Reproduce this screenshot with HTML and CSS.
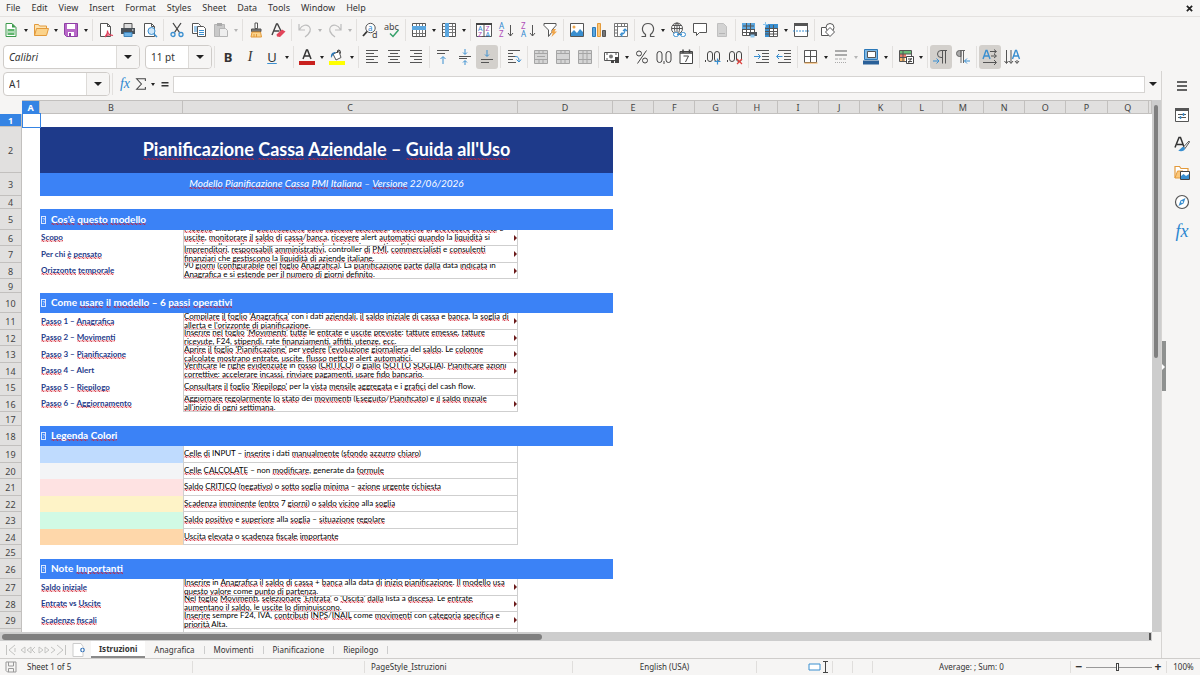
FILE: index.html
```html
<!DOCTYPE html>
<html lang="it">
<head>
<meta charset="utf-8">
<title>Pianificazione Cassa – Istruzioni</title>
<link rel="stylesheet" href="styles.css">
</head>
<body>
<header class="menubar">
  <button>File</button><button>Edit</button><button>View</button><button>Insert</button><button>Format</button><button>Styles</button><button>Sheet</button><button>Data</button><button>Tools</button><button>Window</button><button>Help</button>
  <button class="close" aria-label="Close"><svg viewBox="0 0 8 8" width="7" height="7"><path d="M1 1l6 6M7 1l-6 6" stroke="#222" stroke-width="2"/></svg></button>
</header>

<div class="toolbar">
  <button class="tool" aria-label="New"><svg viewBox="0 0 16 16"><path d="M3 1.500h6l4 4v9H3z" fill="#fff" stroke="#3c9a4c"/><path d="M9 1.500v4h4z" fill="#3c9a4c"/><path d="M4.500 7h7v6h-7z" fill="#5fb56d"/><path d="M5 10h6" stroke="#fff"/></svg></button><button class="caret" aria-label="New options"></button>
  <button class="tool" aria-label="Open"><svg viewBox="0 0 16 16"><path d="M1.500 13.500v-11h4l1 1.500h7v3" fill="#fde3b0" stroke="#e39a3b"/><path d="M1.500 13.500l2-7h12l-2 7z" fill="#fbd38b" stroke="#e39a3b"/></svg></button><button class="caret" aria-label="Open options"></button>
  <button class="tool" aria-label="Save"><svg viewBox="0 0 16 16"><path d="M1.500 1.500h13v13h-11l-2-2z" fill="#b868c8" stroke="#8e3fa5"/><path d="M4 2h8v5H4z" fill="#fff"/><path d="M5 10h6v4H5z" fill="#fff"/><path d="M6 11h2v3H6z" fill="#8e3fa5"/></svg></button><button class="caret" aria-label="Save options"></button>
  <span class="sep"></span>
  <button class="tool" aria-label="Export as PDF"><svg viewBox="0 0 16 16"><path d="M2.500 1.500h7l3 3v10h-10z" fill="#fff" stroke="#555"/><path d="M9.500 1.500v3h3" fill="none" stroke="#555"/><path d="M7 15c2-2 3-4 2.500-6.500M9.500 9c.5 3 2 4 5 4.500M7 14.500c2-1.500 5-2 8-1" fill="none" stroke="#e0405c" stroke-width="1.200"/></svg></button>
  <button class="tool" aria-label="Print"><svg viewBox="0 0 16 16"><path d="M4 1.500h8v5H4z" fill="#ddd" stroke="#555"/><path d="M1 6h14v6H1z" fill="#4a5158"/><path d="M4 10.500h8v4H4z" fill="#6fb3e6" stroke="#3f83b8"/><path d="M12 8h1.500" stroke="#fff"/></svg></button>
  <button class="tool" aria-label="Print preview"><svg viewBox="0 0 16 16"><path d="M2.500 1.500h7l3 3v10h-10z" fill="#fff" stroke="#555"/><path d="M9.500 1.500v3h3" fill="none" stroke="#555"/><circle cx="9.500" cy="9" r="3.500" fill="#cfe6f8" stroke="#3a8fd0"/><path d="M12 12l3 3" stroke="#3a8fd0" stroke-width="1.500"/></svg></button>
  <span class="sep"></span>
  <button class="tool" aria-label="Cut"><svg viewBox="0 0 16 16"><path d="M4 1l6.500 9.500M12 1L5.500 10.500" stroke="#444" stroke-width="1.300"/><circle cx="4" cy="12.500" r="2" fill="none" stroke="#3a8fd0" stroke-width="1.300"/><circle cx="12" cy="12.500" r="2" fill="none" stroke="#3a8fd0" stroke-width="1.300"/></svg></button>
  <button class="tool" aria-label="Copy"><svg viewBox="0 0 16 16"><path d="M1.500 1.500h6l2 2v8h-8z" fill="#fff" stroke="#555"/><path d="M3 5h4M3 7h3M3 9h3" stroke="#3a8fd0"/><path d="M6.500 4.500h6l2 2v8h-8z" fill="#fff" stroke="#555"/><path d="M8 8.500h5M8 10.500h5M8 12.500h5" stroke="#3a8fd0"/></svg></button>
  <button class="tool" aria-label="Paste" disabled><svg viewBox="0 0 16 16"><path d="M1.500 2.500h10v12h-10z" fill="#c9c9c9" stroke="#b5b5b5"/><path d="M4 1h5v3H4z" fill="#a9a9a9"/><path d="M6.500 6.500h6l2 2v6h-8z" fill="#eee" stroke="#b5b5b5"/></svg></button><button class="caret off" aria-label="Paste options"></button>
  <span class="sep"></span>
  <button class="tool" aria-label="Clone formatting"><svg viewBox="0 0 16 16"><path d="M7 1h2.500v5.500H7z" fill="#fff" stroke="#555"/><path d="M3.500 7h9.500v2.500H3.500z" fill="#777" stroke="#555"/><path d="M4 10h8.500l1 5H3z" fill="#fbd38b" stroke="#e39a3b"/><path d="M6 12v3M8.500 12v3" stroke="#e39a3b"/></svg></button>
  <button class="tool" aria-label="Clear formatting"><svg viewBox="0 0 16 16"><path d="M2 13L6.500 2h1L12 11M3.500 9h6" fill="none" stroke="#444" stroke-width="1.400"/><path d="M6.500 12.500l5.500-5 3.500 2-5.500 5.500-3-.5z" fill="#e2455a"/></svg></button>
  <span class="sep"></span>
  <button class="tool" aria-label="Undo" disabled><svg viewBox="0 0 16 16"><path d="M2 2v6h6M2.500 7.500C5 3 10 1.500 12.500 5s-.5 7-4.500 10" fill="none" stroke="#bdbdbd" stroke-width="1.200"/></svg></button><button class="caret off" aria-label="Undo list"></button>
  <button class="tool" aria-label="Redo" disabled><svg viewBox="0 0 16 16"><path d="M14 2v6H8M13.500 7.500C11 3 6 1.500 3.500 5s.5 7 4.500 10" fill="none" stroke="#bdbdbd" stroke-width="1.200"/></svg></button><button class="caret off" aria-label="Redo list"></button>
  <span class="sep"></span>
  <button class="tool" aria-label="Find and replace"><svg viewBox="0 0 16 16"><circle cx="8.500" cy="6" r="4.700" fill="#fff" stroke="#555"/><path d="M5 9.500L1 14" stroke="#333" stroke-width="1.800"/><text x="6" y="8.500" class="gl blue" font-size="8">a</text><text x="10" y="15.500" class="gl" font-size="9">d</text></svg></button>
  <button class="tool" aria-label="Spelling"><svg viewBox="0 0 16 16"><text x="0" y="7.500" class="gl" font-size="9">abc</text><path d="M6 11.500l3 3 5.500-6.500" fill="none" stroke="#35a06a" stroke-width="1.500"/></svg></button>
  <span class="sep"></span>
  <button class="tool" aria-label="Row"><svg viewBox="0 0 16 16"><path d="M1.500 1.500h13v13h-13z" fill="#fff" stroke="#555"/><path d="M5.500 2v12M8.500 2v12M11.500 2v12M2 11.500h12" stroke="#777"/><path d="M1 4h14v4H1z" fill="#5ba7e0"/></svg></button><button class="caret" aria-label="Row options"></button>
  <button class="tool" aria-label="Column"><svg viewBox="0 0 16 16"><path d="M1.500 1.500h13v13h-13z" fill="#fff" stroke="#555"/><path d="M2 4.500h12M2 7.500h12M2 10.500h12M11.500 2v12" stroke="#777"/><path d="M4 1h4v14H4z" fill="#5ba7e0"/></svg></button><button class="caret" aria-label="Column options"></button>
  <span class="sep"></span>
  <button class="tool" aria-label="Sort"><svg viewBox="0 0 16 16"><path d="M.5 1.500h15v13H.5zM8 2v13" fill="#fff" stroke="#555"/><path d="M0 1h16v2H0z" fill="#444"/><text x="2" y="9" class="gl blue" font-size="7">A</text><text x="2" y="14.500" class="gl violet" font-size="7">Z</text><text x="9.500" y="9" class="gl violet" font-size="7">Z</text><text x="9.500" y="14.500" class="gl blue" font-size="7">A</text></svg></button>
  <button class="tool" aria-label="Sort ascending"><svg viewBox="0 0 16 16"><text x="1" y="7" class="gl blue" font-size="8">A</text><text x="1" y="15" class="gl violet" font-size="8">Z</text><path d="M12.500 3v11M10 11l2.500 3 2.500-3" fill="none" stroke="#555"/></svg></button>
  <button class="tool" aria-label="Sort descending"><svg viewBox="0 0 16 16"><text x="1" y="7" class="gl violet" font-size="8">Z</text><text x="1" y="15" class="gl blue" font-size="8">A</text><path d="M12.500 3v11M10 11l2.500 3 2.500-3" fill="none" stroke="#555"/></svg></button>
  <button class="tool" aria-label="AutoFilter"><svg viewBox="0 0 16 16"><path d="M2 1.500h12v2L10 8v2l-3.500 4.500V8L2 3.500z" fill="#fff" stroke="#555"/><path d="M11 7h3l-1.500 2.500H15L9.500 15l1.200-4H9z" fill="#f0a64b"/></svg></button>
  <span class="sep"></span>
  <button class="tool" aria-label="Insert image"><svg viewBox="0 0 16 16"><path d="M1.500 1.500h13v13h-13z" fill="#fff" stroke="#555"/><path d="M2 14v-3l3-3 3 3 3-4 3 3v4z" fill="#3a8fd0"/><circle cx="5" cy="5" r="1.500" fill="#f0a64b"/></svg></button>
  <button class="tool" aria-label="Insert chart"><svg viewBox="0 0 16 16"><path d="M1.500 5.500h3v9h-3z" fill="#5ba7e0" stroke="#2b78b8"/><path d="M6.500 1.500h3v13h-3z" fill="#fbc77a" stroke="#e39a3b"/><path d="M11.500 8.500h3v6h-3z" fill="#777" stroke="#555"/></svg></button>
  <button class="tool" aria-label="Pivot table"><svg viewBox="0 0 16 16"><path d="M1.500 1.500h13v13h-13z" fill="#fff" stroke="#777"/><path d="M4.500 2v12M2 4.500h12M2 8h3M2 11h3M8.500 2v3M11.500 2v3" stroke="#777"/><path d="M7.500 12.500c3 0 4.500-1.500 4.500-5M10 9l2-2 2 2M9.500 10.500l-2 2 2 2" fill="none" stroke="#3a8fd0" stroke-width="1.200"/></svg></button>
  <span class="sep"></span>
  <button class="tool" aria-label="Special character"><svg viewBox="0 0 16 16"><path d="M1.500 14.500h4v-2C0 8 2.500 1.500 8 1.500s8 6.500 2.500 11v2h4" fill="none" stroke="#555" stroke-width="1.200"/></svg></button><button class="caret" aria-label="Special character list"></button>
  <button class="tool" aria-label="Hyperlink"><svg viewBox="0 0 16 16"><circle cx="7" cy="6.500" r="5.500" fill="#fff" stroke="#555"/><path d="M1.500 6.500h11M7 1v11M3 3.500h8" stroke="#555"/><ellipse cx="7" cy="6.500" rx="2.500" ry="5.500" fill="none" stroke="#555"/><rect x="3.500" y="10.500" width="5" height="4" rx="2" fill="#fff" stroke="#3a8fd0"/><rect x="10.500" y="10.500" width="5" height="4" rx="2" fill="#fff" stroke="#3a8fd0"/><path d="M7 12.500h5" stroke="#3a8fd0"/></svg></button>
  <button class="tool" aria-label="Comment"><svg viewBox="0 0 16 16"><path d="M1.500 1.500h13v9h-7l-3 3v-3h-3z" fill="#fff" stroke="#555"/></svg></button>
  <button class="tool" aria-label="Headers and footers" disabled><svg viewBox="0 0 16 16"><path d="M3.500 1.500h6l3 3v10h-9z" fill="#d3d3d3" stroke="#c0c0c0"/><path d="M5 11.500h6" stroke="#b5b5b5"/></svg></button>
  <span class="sep"></span>
  <button class="tool" aria-label="Print area"><svg viewBox="0 0 16 16"><path d="M1.500 1.500h12v12h-12z" fill="#fff" stroke="#555"/><path d="M1 1h13v6H1z" fill="#5ba7e0"/><path d="M2 4h11M5.500 1v12M9.500 1v12M2 7.500h11M2 10.500h11" stroke="#555"/><path d="M8 10h8v4H8z" fill="#4a5158"/><path d="M9.500 12.500h4v3h-4z" fill="#8cc4ec"/></svg></button>
  <button class="tool" aria-label="Freeze panes"><svg viewBox="0 0 16 16"><path d="M2.500 2.500h12v12h-12z" fill="#fff" stroke="#555"/><path d="M2 2h13v4H2zM2 2h4v13H2z" fill="#3a8fd0"/><path d="M2 6.500h13M6.500 3v12M10.500 3v12M2 9.500h13M2 12h13" stroke="#555"/><path d="M2.500 0v5M0 2.500h5" stroke="#8cc4ec"/></svg></button><button class="caret" aria-label="Freeze options"></button>
  <button class="tool" aria-label="Split window"><svg viewBox="0 0 16 16"><path d="M1.500 1.500h13v13h-13z" fill="#fff" stroke="#555"/><path d="M1 1h14v3H1z" fill="#555"/><path d="M0 9h16" stroke="#3a8fd0" stroke-dasharray="2 1"/></svg></button>
  <span class="sep"></span>
  <button class="tool" aria-label="Draw functions"><svg viewBox="0 0 16 16"><path d="M1.500 5.500h7v8h-7z" fill="#fff" stroke="#555"/><circle cx="10" cy="5.500" r="4" fill="#fff" stroke="#555"/><path d="M10 5.500l4.500 4.500-4.500 4.500L5.500 10z" fill="#fff" stroke="#555"/></svg></button>
</div>

<div class="toolbar format">
  <div class="combo font-name"><input value="Calibri" aria-label="Font name"><button aria-label="Font list"><i class="arrow"></i></button></div>
  <div class="combo font-size"><input value="11 pt" aria-label="Font size"><button aria-label="Size list"><i class="arrow"></i></button></div>
  <span class="sep"></span>
  <button class="tool bold" aria-label="Bold">B</button>
  <button class="tool ital" aria-label="Italic">I</button>
  <button class="tool under" aria-label="Underline">U</button><button class="caret" aria-label="Underline style"></button>
  <span class="sep"></span>
  <button class="tool" aria-label="Font color"><svg viewBox="0 0 16 16"><path d="M4 10L7.500 1h1L12 10M5.500 7h5" fill="none" stroke="#333" stroke-width="1.500"/><path d="M0 12h16v4H0z" fill="#c9211e"/></svg></button><button class="caret" aria-label="Font colors"></button>
  <button class="tool" aria-label="Background color"><svg viewBox="0 0 16 16"><path d="M4 5l6-2.500 2 6-5 2.500z" fill="#fff" stroke="#555"/><path d="M8 4l1-3 2 .5.500 3" fill="none" stroke="#333"/><path d="M2 9c-.5-4 1-6 5-6L4 6z" fill="#2b78b8"/><path d="M0 12h16v4H0z" fill="#ff0"/></svg></button><button class="caret" aria-label="Background colors"></button>
  <span class="sep"></span>
  <button class="tool" aria-label="Align left"><svg viewBox="0 0 16 16"><path d="M2 1.500h12M2 4.500h8M2 7.500h12M2 10.500h8M2 13.500h12" stroke="#555"/></svg></button>
  <button class="tool" aria-label="Center horizontally"><svg viewBox="0 0 16 16"><path d="M2 1.500h12M4 4.500h8M2 7.500h12M4 10.500h8M2 13.500h12" stroke="#555"/></svg></button>
  <button class="tool" aria-label="Align right"><svg viewBox="0 0 16 16"><path d="M2 1.500h12M6 4.500h8M2 7.500h12M6 10.500h8M2 13.500h12" stroke="#555"/></svg></button>
  <span class="sep"></span>
  <button class="tool" aria-label="Align top"><svg viewBox="0 0 16 16"><path d="M2 1.500h12M2 4.500h8" stroke="#555"/><path d="M8 15V8M5.500 10L8 7.500l2.500 2.500" fill="none" stroke="#3a8fd0"/></svg></button>
  <button class="tool" aria-label="Center vertically"><svg viewBox="0 0 16 16"><path d="M2 7.500h12M2 9.500h8" stroke="#555"/><path d="M8 0v5M6 3.500l2 2 2-2M8 16v-4M6 13.500l2-2 2 2" fill="none" stroke="#3a8fd0"/></svg></button>
  <button class="tool on" aria-label="Align bottom"><svg viewBox="0 0 16 16"><path d="M2 10.500h12M2 13.500h8" stroke="#555"/><path d="M8 1v6M6 5.500l2 2 2-2" fill="none" stroke="#3a8fd0"/></svg></button>
  <span class="sep"></span>
  <button class="tool" aria-label="Wrap text"><svg viewBox="0 0 16 16"><path d="M2 1.500h12M2 4.500h5M2 7.500h8M2 10.500h5M2 13.500h8" stroke="#555"/><path d="M9 7.500c3 0 4 1 4 5M10.500 10.500L13 13l2-2.500" fill="none" stroke="#3a8fd0"/></svg></button>
  <span class="sep"></span>
  <button class="tool" aria-label="Merge and center" disabled><svg viewBox="0 0 16 16"><path d="M1.500 1.500h13v13h-13z" fill="#d5d5d5" stroke="#a5a5a5"/><path d="M2 4.500h12M2 10.500h12M6 2v2M10 2v2M6 11v3M10 11v3M4 7.500h8" stroke="#a5a5a5"/></svg></button>
  <button class="tool" aria-label="Merge cells" disabled><svg viewBox="0 0 16 16"><path d="M1.500 1.500h13v13h-13z" fill="#d5d5d5" stroke="#a5a5a5"/><path d="M2 4.500h12M2 10.500h12M6 2v2M10 2v2M6 11v3M10 11v3" stroke="#a5a5a5"/></svg></button>
  <button class="tool" aria-label="Split cells" disabled><svg viewBox="0 0 16 16"><path d="M1.500 1.500h13v13h-13z" fill="#d5d5d5" stroke="#a5a5a5"/><path d="M2 4.500h12M2 10.500h12M6 2v12M10 2v12" stroke="#a5a5a5"/></svg></button>
  <span class="sep"></span>
  <button class="tool" aria-label="Format as currency"><svg viewBox="0 0 16 16"><path d="M.5 3.500h14v8H.5z" fill="#fff" stroke="#555"/><circle cx="7" cy="7.500" r="2" fill="#777"/><path d="M2 5h2M11 5h2M2 10h2" stroke="#555"/><path d="M11 8h4v6h-4zM7 11h3v3H7z" fill="#444"/></svg></button><button class="caret" aria-label="Currency list"></button>
  <button class="tool" aria-label="Format as percent"><svg viewBox="0 0 16 16"><circle cx="5" cy="4.500" r="2.500" fill="none" stroke="#444"/><circle cx="11" cy="11.500" r="2.500" fill="none" stroke="#444"/><path d="M12.500 1.500l-9 13" stroke="#444"/></svg></button>
  <button class="tool" aria-label="Format as number"><svg viewBox="0 0 16 16"><rect x="1" y="2.500" width="5" height="11" rx="2.500" fill="none" stroke="#444"/><rect x="10" y="2.500" width="5" height="11" rx="2.500" fill="none" stroke="#444"/><path d="M8 12v3" stroke="#444"/></svg></button>
  <button class="tool" aria-label="Format as date"><svg viewBox="0 0 16 16"><path d="M2 2.500h12.500v12H2z" fill="#fff" stroke="#444"/><path d="M2 4h12M5 .5v3M11.500.5v3" stroke="#444" stroke-width="1.500"/><path d="M5.500 7h5L7.500 13" fill="none" stroke="#444"/></svg></button>
  <span class="sep"></span>
  <button class="tool" aria-label="Add decimal place"><svg viewBox="0 0 16 16"><rect x="2.500" y="2.500" width="5" height="10" rx="2.500" fill="none" stroke="#444"/><rect x="9.500" y="2.500" width="5" height="10" rx="2.500" fill="none" stroke="#444"/><path d="M.5 11v2" stroke="#444"/><path d="M12.500 9.500v6M9.500 12.500h6" stroke="#3a8fd0" stroke-width="1.200"/></svg></button>
  <button class="tool" aria-label="Delete decimal place"><svg viewBox="0 0 16 16"><rect x="2.500" y="2.500" width="5" height="10" rx="2.500" fill="none" stroke="#444"/><rect x="9.500" y="2.500" width="5" height="10" rx="2.500" fill="none" stroke="#444"/><path d="M.5 11v2" stroke="#444"/><path d="M10 10l5 5M15 10l-5 5" stroke="#e0403c" stroke-width="1.200"/></svg></button>
  <span class="sep"></span>
  <button class="tool" aria-label="Increase indent"><svg viewBox="0 0 16 16"><path d="M2 1.500h13M8 4.500h7M8 7.500h7M8 10.500h7M2 13.500h13" stroke="#555"/><path d="M0 7.500h6M4 5l2.500 2.500L4 10" fill="none" stroke="#3a8fd0"/></svg></button>
  <button class="tool" aria-label="Decrease indent"><svg viewBox="0 0 16 16"><path d="M2 1.500h13M8 4.500h7M8 7.500h7M8 10.500h7M2 13.500h13" stroke="#555"/><path d="M6.500 7.500H1M3 5L.5 7.500 3 10" fill="none" stroke="#3a8fd0"/></svg></button>
  <span class="sep"></span>
  <button class="tool" aria-label="Borders"><svg viewBox="0 0 16 16"><path d="M1.500 1.500h12v12h-12zM7.500 2v12M2 7.500h12" fill="#fff" stroke="#555"/><path d="M1.500 14h13" stroke="#f0a64b"/></svg></button><button class="caret" aria-label="Border list"></button>
  <button class="tool" aria-label="Border style" disabled><svg viewBox="0 0 16 16"><path d="M2 2h12M2 6h12" stroke="#aaa" stroke-width="2"/><path d="M2 10h12" stroke="#aaa" stroke-dasharray="3 1"/><path d="M2 13.500h12" stroke="#aaa" stroke-dasharray="1 1"/></svg></button><button class="caret off" aria-label="Border styles"></button>
  <button class="tool" aria-label="Border color"><svg viewBox="0 0 16 16"><path d="M1.500.5h13v10h-13z" fill="#7db8e6" stroke="#2b78b8"/><path d="M4.500 2.500h8v6h-8z" fill="#fff" stroke="#555"/><path d="M0 11.500h16v4H0z" fill="#2a6099"/></svg></button><button class="caret" aria-label="Border colors"></button>
  <span class="sep"></span>
  <button class="tool" aria-label="Conditional formatting"><svg viewBox="0 0 16 16"><path d="M1.500 1.500h12v11h-12z" fill="#fff" stroke="#555"/><path d="M2 2h11v3H2z" fill="#6bbf7a"/><path d="M2 5h6v3H2z" fill="#ee7a6a"/><path d="M2 8h5v4H2z" fill="#f6b56a"/><path d="M2 5h11M2 8.500h11M5 2v10" stroke="#555"/><path d="M8.500 7.500h7v7h-7z" fill="#fff" stroke="#444"/><path d="M10 10h4M10 12.500h4M13.500 9l-3 5" stroke="#444"/></svg></button><button class="caret" aria-label="Conditional list"></button>
  <span class="sep"></span>
  <button class="tool on" aria-label="Left to right"><svg viewBox="0 0 16 16"><path d="M14 1.500H8a3.500 3.500 0 000 7h1.500M9.500 2v12.500M12.500 2v12.500" fill="none" stroke="#555"/><path d="M0 12h6M3.500 9.500L6 12l-2.500 2.500" fill="none" stroke="#3a8fd0"/></svg></button>
  <button class="tool" aria-label="Right to left"><svg viewBox="0 0 16 16"><path d="M6 1.500H4.500a3 3 0 000 6H6z" fill="#aaa" stroke="#666"/><path d="M5 1.500h5M6 1.500V14M8.500 1.500V14" fill="none" stroke="#666"/><path d="M9.500 12H15M12 9.500L9.500 12l2.500 2.500" fill="none" stroke="#3a8fd0"/></svg></button>
  <span class="sep"></span>
  <button class="tool on" aria-label="Text direction horizontal"><svg viewBox="0 0 16 16"><path d="M1 10L4 1.500h1L8 10M2.500 7h4" fill="none" stroke="#3a8fd0" stroke-width="1.400"/><path d="M8 2.500h6M9 7h5M1 13.500h13M12 .5l2.500 2L12 4.500M12 5l2.500 2L12 9M12 11l2.500 2.500L12 16" fill="none" stroke="#555"/></svg></button>
  <button class="tool" aria-label="Text direction vertical"><svg viewBox="0 0 16 16"><path d="M8.500 10l3-8.500h1l3 8.500M10 7h4.500" fill="none" stroke="#3a8fd0" stroke-width="1.400"/><path d="M2.500 1v13M7 1v13M13 11v3M.5 12l2 2.500 2-2.500M5 12l2 2.500L9 12M11 12l2 2.500 2-2.500" fill="none" stroke="#555"/></svg></button>
</div>

<main class="work">
  <section class="document">
    <div class="formula">
      <div class="combo cell-name"><input value="A1" aria-label="Name box"><button aria-label="Names"><i class="arrow"></i></button></div>
      <span class="sep"></span>
      <button class="tool narrow fx" aria-label="Function wizard">fx</button>
      <button class="tool narrow" aria-label="Select function"><svg viewBox="0 0 16 16"><path d="M13 4.500V2H3l5.500 6L3 14h10v-2.500" fill="none" stroke="#444" stroke-width="1.200"/></svg></button><button class="caret" aria-label="Functions"></button>
      <button class="tool narrow" aria-label="Formula"><svg viewBox="0 0 16 16"><path d="M4 6.500h8M4 10h8" stroke="#333" stroke-width="1.800"/></svg></button>
      <input class="formula-input" aria-label="Formula input">
      <button class="expand" aria-label="Expand formula bar"><i class="arrow"></i></button>
    </div>

    <div class="viewport">
      <div class="sheet">
        <table>
          <colgroup><col class="c-head"><col class="c-a"><col class="c-b"><col class="c-c"><col class="c-d"><col span="13"><col class="c-rest"></colgroup>
          <thead><tr><th></th><th class="sel">A</th><th>B</th><th>C</th><th>D</th><th>E</th><th>F</th><th>G</th><th>H</th><th>I</th><th>J</th><th>K</th><th>L</th><th>M</th><th>N</th><th>O</th><th>P</th><th>Q</th><th></th></tr></thead>
          <tbody>
            <tr class="first"><th class="sel">1</th><td class="cursor"></td><td colspan="17"></td></tr>
            <tr class="title"><th>2</th><td></td><td colspan="3" data-spell>Pianificazione Cassa Aziendale – Guida all'Uso</td></tr>
            <tr class="subtitle"><th>3</th><td></td><td colspan="3" data-spell>Modello Pianificazione Cassa PMI Italiana – Versione 22/06/2026</td></tr>
            <tr class="first"><th>4</th></tr>
            <tr class="band tall"><th>5</th><td></td><td colspan="3"><i class="glyph">?</i><span data-spell>Cos'è questo modello</span></td></tr>
            <tr><th>6</th><td></td><td class="label" data-spell>Scopo</td><td class="text"><div class="clip more"><p data-spell>Modello Excel per la pianificazione della liquidità aziendale: consente di prevedere entrate e<br>uscite, monitorare il saldo di cassa/banca, ricevere alert automatici quando la liquidità si<br>avvicina alla soglia minima e pianificare le decisioni operative di tesoreria.</p></div></td></tr>
            <tr><th>7</th><td></td><td class="label" data-spell>Per chi è pensato</td><td class="text"><div class="clip more"><p data-spell>Imprenditori, responsabili amministrativi, controller di PMI, commercialisti e consulenti<br>finanziari che gestiscono la liquidità di aziende italiane.</p></div></td></tr>
            <tr><th>8</th><td></td><td class="label" data-spell>Orizzonte temporale</td><td class="text"><div class="clip more"><p data-spell>90 giorni (configurabile nel foglio Anagrafica). La pianificazione parte dalla data indicata in<br>Anagrafica e si estende per il numero di giorni definito.</p></div></td></tr>
            <tr class="gap"><th>9</th></tr>
            <tr class="band"><th>10</th><td></td><td colspan="3"><i class="glyph">?</i><span data-spell>Come usare il modello – 6 passi operativi</span></td></tr>
            <tr><th>11</th><td></td><td class="label" data-spell>Passo 1 – Anagrafica</td><td class="text"><div class="clip more"><p data-spell>Compilare il foglio 'Anagrafica' con i dati aziendali, il saldo iniziale di cassa e banca, la soglia di<br>allerta e l'orizzonte di pianificazione.</p></div></td></tr>
            <tr><th>12</th><td></td><td class="label" data-spell>Passo 2 – Movimenti</td><td class="text"><div class="clip more"><p data-spell>Inserire nel foglio 'Movimenti' tutte le entrate e uscite previste: fatture emesse, fatture<br>ricevute, F24, stipendi, rate finanziamenti, affitti, utenze, ecc.</p></div></td></tr>
            <tr><th>13</th><td></td><td class="label" data-spell>Passo 3 – Pianificazione</td><td class="text"><div class="clip more"><p data-spell>Aprire il foglio 'Pianificazione' per vedere l'evoluzione giornaliera del saldo. Le colonne<br>calcolate mostrano entrate, uscite, flusso netto e alert automatici.</p></div></td></tr>
            <tr><th>14</th><td></td><td class="label" data-spell>Passo 4 – Alert</td><td class="text"><div class="clip more"><p data-spell>Verificare le righe evidenziate in rosso (CRITICO) o giallo (SOTTO SOGLIA). Pianificare azioni<br>correttive: accelerare incassi, rinviare pagamenti, usare fido bancario.</p></div></td></tr>
            <tr><th>15</th><td></td><td class="label" data-spell>Passo 5 – Riepilogo</td><td class="text"><div class="clip"><p data-spell>Consultare il foglio 'Riepilogo' per la vista mensile aggregata e i grafici del cash flow.</p></div></td></tr>
            <tr><th>16</th><td></td><td class="label" data-spell>Passo 6 – Aggiornamento</td><td class="text"><div class="clip more"><p data-spell>Aggiornare regolarmente lo stato dei movimenti (Eseguito/Pianificato) e il saldo iniziale<br>all'inizio di ogni settimana.</p></div></td></tr>
            <tr class="gap"><th>17</th></tr>
            <tr class="band"><th>18</th><td></td><td colspan="3"><i class="glyph">?</i><span data-spell>Legenda Colori</span></td></tr>
            <tr><th>19</th><td></td><td class="k-input"></td><td class="text"><div class="clip"><p data-spell>Celle di INPUT – inserire i dati manualmente (sfondo azzurro chiaro)</p></div></td></tr>
            <tr><th>20</th><td></td><td class="k-calc"></td><td class="text"><div class="clip"><p data-spell>Celle CALCOLATE – non modificare, generate da formule</p></div></td></tr>
            <tr><th>21</th><td></td><td class="k-crit"></td><td class="text"><div class="clip"><p data-spell>Saldo CRITICO (negativo) o sotto soglia minima – azione urgente richiesta</p></div></td></tr>
            <tr><th>22</th><td></td><td class="k-due"></td><td class="text"><div class="clip"><p data-spell>Scadenza imminente (entro 7 giorni) o saldo vicino alla soglia</p></div></td></tr>
            <tr><th>23</th><td></td><td class="k-ok"></td><td class="text"><div class="clip"><p data-spell>Saldo positivo e superiore alla soglia – situazione regolare</p></div></td></tr>
            <tr><th>24</th><td></td><td class="k-high"></td><td class="text"><div class="clip"><p data-spell>Uscita elevata o scadenza fiscale importante</p></div></td></tr>
            <tr class="gap"><th>25</th></tr>
            <tr class="band"><th>26</th><td></td><td colspan="3"><i class="glyph">?</i><span data-spell>Note Importanti</span></td></tr>
            <tr><th>27</th><td></td><td class="label" data-spell>Saldo iniziale</td><td class="text"><div class="clip more"><p data-spell>Inserire in Anagrafica il saldo di cassa + banca alla data di inizio pianificazione. Il modello usa<br>questo valore come punto di partenza.</p></div></td></tr>
            <tr><th>28</th><td></td><td class="label" data-spell>Entrate vs Uscite</td><td class="text"><div class="clip more"><p data-spell>Nel foglio Movimenti, selezionare 'Entrata' o 'Uscita' dalla lista a discesa. Le entrate<br>aumentano il saldo, le uscite lo diminuiscono.</p></div></td></tr>
            <tr><th>29</th><td></td><td class="label" data-spell>Scadenze fiscali</td><td class="text"><div class="clip more"><p data-spell>Inserire sempre F24, IVA, contributi INPS/INAIL come movimenti con categoria specifica e<br>priorità Alta.</p></div></td></tr>
            <tr><th></th><td></td><td></td><td class="text"></td></tr>
          </tbody>
        </table>
      </div>
      <div class="vscroll"><span></span></div>
    </div>
    <div class="hscroll"><span></span><b></b></div>

    <nav class="tabs">
      <span class="nav-arrows"><svg viewBox="0 0 62 12" width="62" height="12"><path d="M1.500 1v10M10 1L4 6l6 5M10 4v4M20 3l-4 3 4 3zM26 3l-4 3 4 3zM30 3l-3 3 3 3M34 3l4 3-4 3zM40 3l4 3-4 3zM46 3l4 3-4 3M52 1l6 5-6 5M60.500 1v10" fill="none" stroke="#c4c4c2"/></svg></span>
      <button class="add" aria-label="Add sheet"><svg viewBox="0 0 14 14" width="14" height="14"><path d="M1 .5h8l2 3v10H1z" fill="#fff" stroke="#ccc"/><circle cx="10.500" cy="7" r="2.300" fill="#2f6fb5"/><path d="M10.500 5.500v3M9 7h3" stroke="#fff"/></svg></button>
      <button class="tab active">Istruzioni</button><button class="tab">Anagrafica</button><button class="tab">Movimenti</button><button class="tab">Pianificazione</button><button class="tab">Riepilogo</button>
    </nav>
  </section>

  <aside class="sidebar">
    <button aria-label="Sidebar settings"><svg viewBox="0 0 16 16"><path d="M3 4h10M3 8h10M3 12h10" stroke="#333" stroke-width="1.500"/></svg></button>
    <button aria-label="Properties"><svg viewBox="0 0 16 16"><path d="M1.500 1.500h13v13h-13z" fill="#fff" stroke="#555"/><path d="M1 1h14v3H1z" fill="#555"/><path d="M4 7.500h8M4 10.500h8" stroke="#555"/><path d="M9.500 6v3M6.500 9v3" stroke="#3a8fd0" stroke-width="1.400"/></svg></button>
    <button aria-label="Styles"><svg viewBox="0 0 16 16"><path d="M1 11.500L5 1.500h1.500L10 11M3 8.500h6" fill="none" stroke="#333" stroke-width="1.500"/><path d="M15 5L9.500 11l1.500 1.500L15.500 6z" fill="#fff" stroke="#555"/><path d="M10 11c-3-.5-3 2.500-6 3.500 3 1.500 7 .5 7-2z" fill="#3a8fd0"/></svg></button>
    <button aria-label="Gallery"><svg viewBox="0 0 16 16"><path d="M1 13V1.500h4.500L7 3.500h7V13" fill="#fff" stroke="#e39a3b" stroke-width="1.200"/><path d="M1 13L3.500 6H9v7z" fill="#fbc77a" stroke="#e39a3b"/><path d="M6.500 6.500h9v8h-9z" fill="#fff" stroke="#444"/><path d="M7 14v-3l2.500-2 2.500 2 3-2v5z" fill="#3a8fd0"/></svg></button>
    <button aria-label="Navigator"><svg viewBox="0 0 16 16"><circle cx="8" cy="8" r="6.500" fill="#fff" stroke="#555" stroke-width="1.200"/><path d="M11.500 4L9.500 9.500 4.500 12 6.500 6.500z" fill="#3a8fd0"/><circle cx="8" cy="8" r="1" fill="#fff"/></svg></button>
    <button class="fx big" aria-label="Functions">fx</button>
    <span class="handle"></span>
  </aside>
</main>

<footer class="status">
  <span class="s-save"><svg viewBox="0 0 12 12" width="12" height="12"><path d="M1 1h10v10H2.500L1 9.500zM3.500 1v4h5V1M3.500 11V7.500h5V11" fill="none" stroke="#999"/></svg></span>
  <span class="s-sheet">Sheet 1 of 5</span>
  <span class="s-blank"></span>
  <span class="s-style">PageStyle_Istruzioni</span>
  <span class="s-lang">English (USA)</span>
  <span class="s-mode"><svg viewBox="0 0 20 12" width="20" height="12"><path d="M1 3h11v6H1z" fill="#fff" stroke="#3a8fd0"/><path d="M15 .5h5M15 11.500h5M17.500.5v11" stroke="#444"/></svg></span>
  <span class="s-slot"></span><span class="s-slot"></span>
  <span class="s-sum">Average: ; Sum: 0</span>
  <span class="s-zoom"><button aria-label="Zoom out">−</button><input type="range" min="0" max="100" value="49" aria-label="Zoom"><button aria-label="Zoom in">+</button></span>
  <span class="s-pct">100%</span>
</footer>
<script src="spell.js"></script>
</body>
</html>
```
FILE: styles.css
```css
* { box-sizing: border-box; }

:root {
  --chrome: #f6f5f4;
  --line: #d6d4d2;
  --blue: #3b82f6;
  --navy: #1e3a8a;
  --ui: "Noto Sans", "Open Sans", sans-serif;
  --cell: Lato, "Noto Sans", sans-serif;
}

body {
  margin: 0;
  height: 100vh;
  display: flex;
  flex-direction: column;
  overflow: hidden;
  background: var(--chrome);
  color: #333;
  font: 8px/12px var(--ui);
}

button, input { font: inherit; color: inherit; }
button { border: 0; padding: 0; background: none; }
svg { display: block; overflow: visible; }

/* Menu bar */
.menubar {
  display: flex;
  align-items: center;
  gap: 11px;
  height: 17px;
  padding: 0 7px 0 6px;
  border-bottom: 1px solid #e4e2e0;
  font-size: 9px;
}
.menubar .close { margin-left: auto; }

/* Toolbars */
.toolbar {
  display: flex;
  align-items: center;
  height: 27px;
  padding-bottom: 1px;
}
.tool {
  display: flex;
  flex: none;
  align-items: center;
  justify-content: center;
  width: 22px;
  height: 24px;
  border-radius: 3px;
}
.tool.on { background: #d3d0cc; }
.tool svg, .sidebar svg { width: 16px; height: 16px; }
.tool.narrow { width: 16px; }
.tool.narrow svg { width: 14px; height: 14px; }
.gl { font-family: "Noto Sans", sans-serif; fill: #444; }
.gl.blue { fill: #2b86d0; }
.gl.violet { fill: #b04fb8; }
.caret {
  flex: none;
  width: 8px;
  height: 24px;
  display: flex;
  align-items: center;
  justify-content: center;
}
.caret::before, .arrow {
  content: "";
  border: 3px solid transparent;
  border-top: 3px solid #222;
  border-bottom: 0;
}
.caret::before { border-width: 3px 2px 0; }
.caret.off::before { border-top-color: #b5b5b5; }
.arrow { display: block; border-width: 4px 4px 0; }
.sep {
  flex: none;
  width: 1px;
  height: 22px;
  margin: 0 2px;
  background: #e2e0de;
}
.bold { font: 700 13px/16px "Noto Sans", sans-serif; }
.ital { font: italic 14px/16px "Liberation Serif", serif; }
.under { font: 13px/15px "Noto Sans", sans-serif; text-decoration: underline #3a8fd0; }

.combo {
  display: flex;
  flex: none;
  height: 24px;
  border: 1px solid #cfccc9;
  border-radius: 4px;
  background: #fff;
  overflow: hidden;
}
.combo input {
  flex: 1;
  min-width: 0;
  border: 0;
  padding: 0 5px;
  background: none;
  outline: 0;
}
.combo button {
  flex: none;
  width: 23px;
  display: grid;
  place-items: center;
  border-left: 1px solid #dddbd8;
  background: #f6f5f4;
}
.font-name { width: 137px; margin: 0 5px 0 3px; font-size: 10px; }
.font-name input { font-style: italic; }
.font-size { width: 67px; font-size: 10px; }

/* Work area */
.work { flex: 1; display: flex; min-height: 0; }
.document { flex: 1; min-width: 0; display: flex; flex-direction: column; }
.formula { display: flex; align-items: center; height: 29px; padding-bottom: 3px; }
.cell-name { width: 107px; margin-left: 3px; font-size: 10px; }
.formula .sep { margin: 0 4px 0 2px; }
.fx { font: italic 14px/16px "Liberation Serif", serif; color: #2b86d0; }
.formula-input {
  flex: 1;
  min-width: 0;
  height: 17px;
  border: 1px solid #d6d4d2;
  background: #fff;
}
.expand { width: 16px; display: grid; place-items: center; }

.viewport { flex: 1; min-height: 0; display: flex; }
.sheet { flex: 1; min-width: 0; overflow: hidden; background: #fff; }

table {
  width: 100%;
  table-layout: fixed;
  border-collapse: separate;
  border-spacing: 0;
}
.c-head { width: 22px; }
.c-a { width: 18px; }
.c-b { width: 143px; }
.c-c { width: 335px; }
.c-d { width: 95px; }
.c-rest { width: 3px; }

th {
  padding: 0;
  border-right: 1px solid #c2c0be;
  border-bottom: 1px solid #c2c0be;
  background: #e1e0df;
  color: #444;
  font: 9px/11px var(--ui);
}
thead th { height: 14px; border-top: 1px solid #c2c0be; }
thead th:first-child { background: var(--chrome); border-color: var(--chrome); }
tbody th { padding-top: 1px; }
th.sel { background: #3584e4; color: #fff; font-weight: 700; }

tbody tr { --h: 16px; height: var(--h); }
tbody tr:nth-child(odd) { --h: 17px; }
tbody tr.first { --h: 13px; }
tbody tr.gap { --h: 14px; }
tbody tr.title { --h: 46px; }
tbody tr.subtitle { --h: 23px; }
tbody tr.band { --h: 20px; }
tbody tr.band.tall { --h: 21px; }
tbody tr:last-child { --h: 17px; }

td { padding: 0; font-family: var(--cell); white-space: nowrap; }
.title td, .subtitle td { text-align: center; color: #fff; }
.title td[colspan] { background: var(--navy); font-size: 18px; line-height: 24px; font-weight: 700; padding-bottom: 3px; }
.subtitle td[colspan] { background: var(--blue); font-size: 10px; font-style: italic; padding-bottom: 3px; }
.band td[colspan] { background: var(--blue); color: #fff; font-size: 10px; font-weight: 700; padding: 0 0 2px 1px; }
.glyph {
  display: inline-block;
  width: 5px;
  height: 8px;
  margin-right: 5px;
  border: 1px solid #dbe8ff;
  font: 5px/6px var(--ui);
  text-align: center;
  vertical-align: middle;
}
.label { padding: 0 0 2px 1px; color: var(--navy); font-size: 8px; font-weight: 700; }
.text { border: 1px solid #cfcfcf; border-top: 0; color: #000; font-size: 8px; }
.clip {
  position: relative;
  display: flex;
  align-items: center;
  height: calc(var(--h) - 1px);
  padding-bottom: 1px;
  overflow: hidden;
}
.clip p { margin: 0; line-height: 9px; }
.more::after {
  content: "";
  position: absolute;
  right: 0;
  top: 5px;
  border: solid transparent;
  border-width: 3px 0 3px 3px;
  border-left-color: #6b1a1a;
}
.cursor { position: relative; }
.cursor::after {
  content: "";
  position: absolute;
  inset: -1px -1px -1px 0;
  border: 1px solid #3584e4;
}
.k-input { background: #bfdbfe; }
.k-calc { background: #f3f4f6; }
.k-crit { background: #fee2e2; }
.k-due { background: #fef3c7; }
.k-ok { background: #d1fae5; }
.k-high { background: #fed7aa; }

.typo {
  background: url("data:image/svg+xml,%3Csvg xmlns='http://www.w3.org/2000/svg' width='4' height='2'%3E%3Cpath d='M0 1.500L1 .5L3 1.500L4 .5' fill='none' stroke='%23d02030'/%3E%3C/svg%3E") repeat-x left bottom;
}

/* Scroll bars */
.vscroll { width: 9px; padding: 5px 3px 0 2px; background: #cdcdcd; }
.vscroll span { display: block; height: 48%; border-radius: 3px; background: #7f7f7f; }
.hscroll {
  display: flex;
  align-items: center;
  justify-content: space-between;
  height: 9px;
  margin-right: 9px;
  padding: 0 1px 0 2px;
  background: #cdcdcd;
}
.hscroll span { width: 47%; height: 6px; border-radius: 3px; background: #7f7f7f; }
.hscroll b { width: 2px; height: 7px; background: #555; }

/* Sheet tabs */
.tabs { display: flex; align-items: stretch; height: 17px; padding-left: 5px; }
.nav-arrows { display: grid; align-items: center; }
.add { width: 24px; display: grid; place-items: center; }
.tab { position: relative; padding: 0 10px 0 9px; }
.tab + .tab::after {
  content: "";
  position: absolute;
  right: 0;
  top: 5px;
  height: 8px;
  border-right: 1px solid #ccc;
}
.tab.active { padding: 0 8px; background: #fff; border-bottom: 2px solid #8a8a8a; font-weight: 700; }

/* Sidebar */
.sidebar {
  position: relative;
  width: 39px;
  display: flex;
  flex-direction: column;
  align-items: center;
  padding-left: 2px;
  border-left: 1px solid var(--line);
}
.sidebar button { height: 29px; display: grid; place-items: center; }
.big { font-size: 18px; }
.handle {
  position: absolute;
  left: 0;
  top: 46%;
  width: 4px;
  height: 50px;
  background: #8f9190;
}
.handle::after {
  content: "";
  position: absolute;
  left: 0;
  top: 23px;
  border: solid transparent;
  border-width: 3px 0 3px 3px;
  border-left-color: #fff;
}

/* Status bar */
.status {
  display: flex;
  align-items: center;
  height: 17px;
  border-top: 1px solid #cfcdcb;
}
.status > span {
  flex: none;
  height: 12px;
  display: flex;
  align-items: center;
  justify-content: center;
  border-right: 1px solid #e0dedc;
}
.status > .s-save { width: 22px; border: 0; }
.status > .s-sheet { width: 171px; padding-left: 5px; justify-content: flex-start; }
.status > .s-blank { width: 172px; }
.status > .s-style { width: 208px; padding-left: 6px; justify-content: flex-start; }
.status > .s-lang { width: 184px; }
.status > .s-mode { flex: 1; justify-content: flex-end; padding-right: 4px; }
.status > .s-slot { width: 20px; }
.status > .s-sum { width: 198px; }
.s-zoom { width: 96px; gap: 2px; }
.s-zoom button { font: 700 12px/12px var(--ui); width: 9px; }
.s-zoom input {
  appearance: none;
  width: 66px;
  height: 8px;
  margin: 0;
  background: linear-gradient(#999, #999) center / 100% 1px no-repeat;
}
.s-zoom input::-webkit-slider-thumb {
  appearance: none;
  width: 3px;
  height: 8px;
  border: 1px solid #444;
  background: #fff;
}
.status > .s-pct { width: 33px; border: 0; }
```
FILE: spell.js
```js
const known = new Set(("excel per la le chi e i o a in alert controller data come con del dei con cash flow vs " +
  "note alta input non da dati sempre rate iva f24 che lista no si alla generate").split(" "));

document.querySelectorAll("[data-spell]").forEach((block) => {
  for (const node of [...block.childNodes]) {
    if (node.nodeType !== Node.TEXT_NODE) continue;
    const out = document.createDocumentFragment();
    for (const part of node.textContent.split(/([\p{L}']+\d*)/u)) {
      if (/^'?\p{L}/u.test(part) && !known.has(part.toLowerCase().replace(/^'|'$/g, ""))) {
        const mark = document.createElement("span");
        mark.className = "typo";
        mark.textContent = part;
        out.append(mark);
      } else {
        out.append(part);
      }
    }
    node.replaceWith(out);
  }
});
```
